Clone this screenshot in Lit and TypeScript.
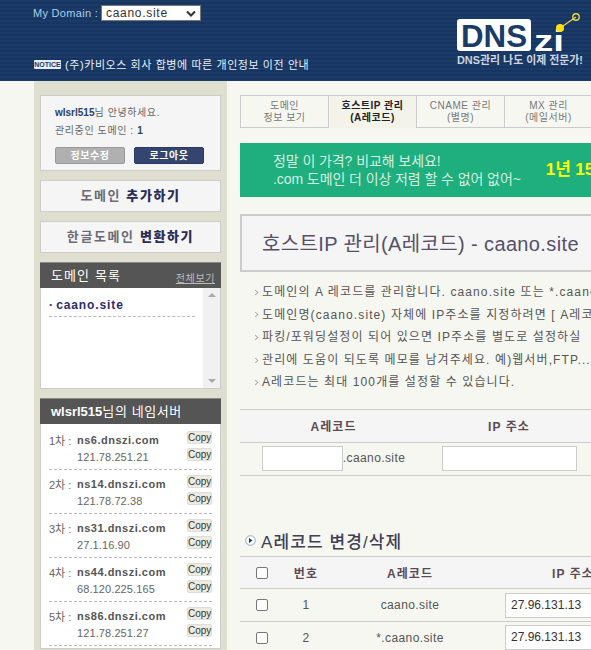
import { LitElement, html, css } from "lit";
import { customElement } from "lit/decorators.js";

const NS = [
  ["1차", "ns6.dnszi.com", "121.78.251.21"],
  ["2차", "ns14.dnszi.com", "121.78.72.38"],
  ["3차", "ns31.dnszi.com", "27.1.16.90"],
  ["4차", "ns44.dnszi.com", "68.120.225.165"],
  ["5차", "ns86.dnszi.com", "121.78.251.27"],
];
const NOTES = [
  "도메인의 A 레코드를 관리합니다. caano.site 또는 *.caano.site",
  "도메인명(caano.site) 자체에 IP주소를 지정하려면 [ A레코드",
  "파킹/포워딩설정이 되어 있으면 IP주소를 별도로 설정하실",
  "관리에 도움이 되도록 메모를 남겨주세요. 예)웹서버,FTP...",
  "A레코드는 최대 100개를 설정할 수 있습니다.",
];

@customElement("app-root")
export class AppRoot extends LitElement {
  static styles = css`
    :host { display: block; width: 591px; height: 650px; overflow: hidden; background: #f7f7f2;
      font-family: "Liberation Sans", "Noto Sans CJK KR", sans-serif; font-size: 12px; color: #555; }
    * { box-sizing: border-box; }
    .header { height: 81px; display: flex; justify-content: space-between; padding: 0 8px 0 33px;
      background: repeating-linear-gradient(180deg, #1b3b69 0 2px, #173560 2px 4px); }
    .hl { display: flex; flex-direction: column; }
    .dom { display: flex; align-items: center; gap: 3px; margin-top: 5px; height: 16px; font-size: 11px; color: #a8d0ee; letter-spacing: .3px; }
    .sel { width: 100px; height: 16px; background: #fff; border: 1px solid #777; color: #333; display: flex; align-items: center;
      justify-content: space-between; padding: 0 4px; font-size: 12px; letter-spacing: .7px; }
    .notice { display: flex; align-items: center; gap: 4px; margin: 35px 0 0 1px; color: #e8f0f6; font-size: 11px; letter-spacing: .58px; white-space: nowrap; }
    .badge { background: #e6edf3; color: #1b3b69; font-size: 7px; font-weight: 700; width: 27px; height: 9px; line-height: 9px;
      text-align: center; border-radius: 1px; letter-spacing: 0; }
    .logo { margin-top: 10px; display: block; }
    .logo text { font-family: "Liberation Sans", "Noto Sans CJK KR", sans-serif; font-weight: 700; }
    .body { display: flex; align-items: flex-start; height: 569px; }
    .side { flex: none; width: 193px; height: 569px; margin-left: 34px; background: #dfdfd0; padding: 14px 6px 0; display: flex; flex-direction: column; gap: 9px; }
    .card { background: #f5f5f5; border: 1px solid #ccc; flex: none; }
    .user { height: 76px; padding: 8px 14px; font-size: 10px; line-height: 18px; color: #666; letter-spacing: .6px; }
    .user b { color: #2b4165; letter-spacing: 0; }
    .btns { display: flex; gap: 9px; margin-top: 7px; }
    .btn { width: 70px; height: 17px; border-radius: 2px; text-align: center; line-height: 15px; font-size: 10px; font-weight: 700; color: #fff; border: 1px solid #999; background: #b0b0b0; letter-spacing: .5px; }
    .btn.dark { background: #34466f; border-color: #2a3a60; }
    .big { height: 32px; text-align: center; line-height: 29px; font-size: 13px; font-weight: 700; color: #6b6b75; letter-spacing: 1.6px; }
    .big b { color: #2b2d55; }
    .box { background: #fff; border: 1px solid #ccc; border-top: 0; flex: none; }
    .boxh { height: 26px; background: #555; border-top: 1px solid #888; margin: 0 -1px; color: #fff; font-size: 13px; letter-spacing: 1.1px; padding: 0 6px 3px 11px;
      display: flex; align-items: center; justify-content: space-between; }
    .boxh u { font-size: 10px; color: #bbb; letter-spacing: .6px; margin-top: 6px; }
    .boxh .who { letter-spacing: .6px; }
    .boxh .who b { letter-spacing: 0; }
    .list { height: 100px; display: flex; }
    .items { flex: 1; padding: 7px 8px 6px; }
    .item { height: 22px; border-bottom: 1px dashed #bbb; font-size: 12px; font-weight: 700; color: #2c2c6c; letter-spacing: .9px; line-height: 20px; word-spacing: -2px; }
    .sb { width: 17px; background: #f1f1f1; display: flex; flex-direction: column; justify-content: space-between; align-items: center; padding: 5px 0; }
    .up, .down { width: 0; height: 0; border-left: 4px solid transparent; border-right: 4px solid transparent; }
    .up { border-bottom: 4px solid #aaa; }
    .down { border-top: 4px solid #aaa; }
    .ns { height: 224px; padding: 2px 8px 0; background: #fff; }
    .nsr { height: 44px; border-bottom: 1px dashed #bbb; display: grid; grid-template-columns: 28px 1fr 26px; grid-template-rows: 17px 17px; align-content: start; padding-top: 5px; align-items: center; font-size: 11px; }
    .nsr .l { color: #666; }
    .nsr .d { font-weight: 700; color: #555; letter-spacing: .5px; }
    .nsr .i { grid-column: 2; color: #666; letter-spacing: .1px; }
    .copy { justify-self: end; align-self: start; width: 25px; height: 13px; background: #ecece0; border: 1px solid #ddd; border-radius: 2px; font-size: 10px; line-height: 11px; text-align: center; color: #333; }
    .main { flex: none; width: 760px; margin-left: 13px; padding-top: 14px; }
    .tabs { display: flex; height: 33px; border-bottom: 1px solid #ccc; }
    .tab { width: 89px; border: 1px solid #ccc; border-bottom: 0; margin-right: -1px; background: #f7f7f2; text-align: center; font-size: 10px; line-height: 12px; padding-top: 4px; color: #777; letter-spacing: .5px; }
    .tab.on { background: #f3f3ea; color: #222; font-weight: 700; height: 33px; }
    .banner { height: 54px; margin-top: 15px; background: #1fae7e; display: flex; padding-left: 33px; align-items: center; color: #d4efe0; font-size: 14px; line-height: 18px; letter-spacing: -.08px; }
    .banner .y { margin-left: 25px; color: #ff0; font-size: 17px; font-weight: 700; }
    .title { height: 58px; margin-top: 17px; background: #f5f5f5; border: 2px solid #ccc; padding-left: 20px; line-height: 56px; font-size: 20px; letter-spacing: .37px; color: #56506a; white-space: nowrap; }
    .notes { margin: 9px 0 0 13px; padding: 0; list-style: none; font-size: 12px; line-height: 22.6px; color: #555; letter-spacing: 1.1px; white-space: nowrap; }
    .notes li { display: flex; align-items: center; gap: 4px; }
    .gt { width: 5px; height: 5px; border-right: 1.5px solid #999; border-top: 1.5px solid #999; transform: rotate(45deg) scale(.8); }
    .t1 { margin-top: 15px; border-top: 1px solid #ccc; }
    .row { display: grid; align-items: center; border-bottom: 1px solid #ccc; text-align: center; }
    .t1 .row { grid-template-columns: 187px 164px; height: 33px; }
    .th { background: #f5f5f5; font-weight: 700; color: #5a4a55; letter-spacing: 1.1px; }
    .inp { height: 25px; background: #fff; border: 1px solid #ccc; }
    .cellin { display: flex; justify-content: center; }
    .cellin span { line-height: 25px; color: #555; letter-spacing: .4px; }
    .h { display: flex; align-items: center; gap: 5px; margin-top: 54px; height: 21px; font-size: 17px; color: #3f3f55; font-weight: 500; padding-left: 5px; letter-spacing: 1.1px; }
    .t2 { margin-top: 5px; border-top: 1px solid #ccc; }
    .t2 .row { grid-template-columns: 44px 44px 164px 162px; height: 32.5px; }
    .t2 .row > span { letter-spacing: .4px; }
    .t2 .th > span { letter-spacing: 1.1px; }
    .cb { width: 12px; height: 12px; margin: 0 auto; background: #fff; border: 1px solid #777; border-radius: 2px; }
    .ip { width: 135px; height: 25px; margin-left: 13px; background: #fff; border: 1px solid #ccc; text-align: left; padding-left: 5px; line-height: 23px; color: #333; }
  `;

  render() {
    return html`
      <div class="header">
        <div class="hl">
          <div class="dom">My Domain : <div class="sel">caano.site
            <svg width="10" height="7" viewBox="0 0 10 7"><path d="M1 1.5 5 5.5 9 1.5" fill="none" stroke="#333" stroke-width="2"/></svg></div></div>
          <div class="notice"><span class="badge">NOTICE</span>(주)카비오스 회사 합병에 따른 개인정보 이전 안내</div>
        </div>
        <svg class="logo" width="126" height="60" viewBox="0 0 126 60">
          <rect x="0" y="9" width="74" height="32" rx="3" fill="#fff"/>
          <text x="4" y="37" font-size="31" fill="#1b3b69" textLength="66" lengthAdjust="spacingAndGlyphs">DNS</text>
          <text x="77" y="41" font-size="29" fill="#fff" textLength="30" lengthAdjust="spacingAndGlyphs">zi</text>
          <path d="M103 18 119 7" stroke="#e8d44a" stroke-width="1.2"/>
          <circle cx="103" cy="18" r="4" fill="#ffdf10"/>
          <circle cx="119" cy="7" r="3.2" fill="none" stroke="#e8d44a" stroke-width="1.4"/>
          <text x="0" y="54" font-size="11" fill="#cdd6e0" textLength="126" lengthAdjust="spacingAndGlyphs">DNS관리 나도 이제 전문가!</text>
        </svg>
      </div>
      <div class="body">
        <div class="side">
          <div class="card user">
            <div><b>wlsrl515</b>님 안녕하세요.</div>
            <div>관리중인 도메인 : <b>1</b></div>
            <div class="btns"><div class="btn">정보수정</div><div class="btn dark">로그아웃</div></div>
          </div>
          <div class="card big">도메인 <b>추가하기</b></div>
          <div class="card big">한글도메인 <b>변환하기</b></div>
          <div class="box">
            <div class="boxh">도메인 목록<u>전체보기</u></div>
            <div class="list">
              <div class="items"><div class="item">· caano.site</div></div>
              <div class="sb"><div class="up"></div><div class="down"></div></div>
            </div>
          </div>
          <div class="box">
            <div class="boxh"><span class="who"><b>wlsrl515</b>님의 네임서버</span></div>
            <div class="ns">
              ${NS.map((n) => html`<div class="nsr">
                <span class="l">${n[0]} :</span><span class="d">${n[1]}</span><span class="copy">Copy</span>
                <span class="i">${n[2]}</span><span class="copy">Copy</span>
              </div>`)}
            </div>
          </div>
        </div>
        <div class="main">
          <div class="tabs">
            <div class="tab">도메인<br />정보 보기</div>
            <div class="tab on">호스트IP 관리<br />(A레코드)</div>
            <div class="tab">CNAME 관리<br />(별명)</div>
            <div class="tab">MX 관리<br />(메일서버)</div>
          </div>
          <div class="banner">
            <div>정말 이 가격? 비교해 보세요!<br />.com 도메인 더 이상 저렴 할 수 없어 없어~</div>
            <div class="y">1년 15</div>
          </div>
          <div class="title">호스트IP 관리(A레코드) - caano.site</div>
          <ul class="notes">${NOTES.map((t) => html`<li><i class="gt"></i>${t}</li>`)}</ul>
          <div class="t1">
            <div class="row th"><span>A레코드</span><span>IP 주소</span></div>
            <div class="row">
              <div class="cellin"><div class="inp" style="width:81px"></div><span>.caano.site</span></div>
              <div class="cellin"><div class="inp" style="width:135px"></div></div>
            </div>
          </div>
          <div class="h">
            <svg width="11" height="11" viewBox="0 0 11 11"><circle cx="5.5" cy="5.5" r="4.8" fill="#fff" stroke="#8fa6c8"/><path d="M4 3v5l3.5-2.5z" fill="#1b3b69"/></svg>
            A레코드 변경/삭제
          </div>
          <div class="t2">
            <div class="row th"><div class="cb"></div><span>번호</span><span>A레코드</span><span>IP 주소</span></div>
            <div class="row"><div class="cb"></div><span>1</span><span>caano.site</span><div class="ip">27.96.131.13</div></div>
            <div class="row"><div class="cb"></div><span>2</span><span>*.caano.site</span><div class="ip">27.96.131.13</div></div>
          </div>
        </div>
      </div>
    `;
  }
}
